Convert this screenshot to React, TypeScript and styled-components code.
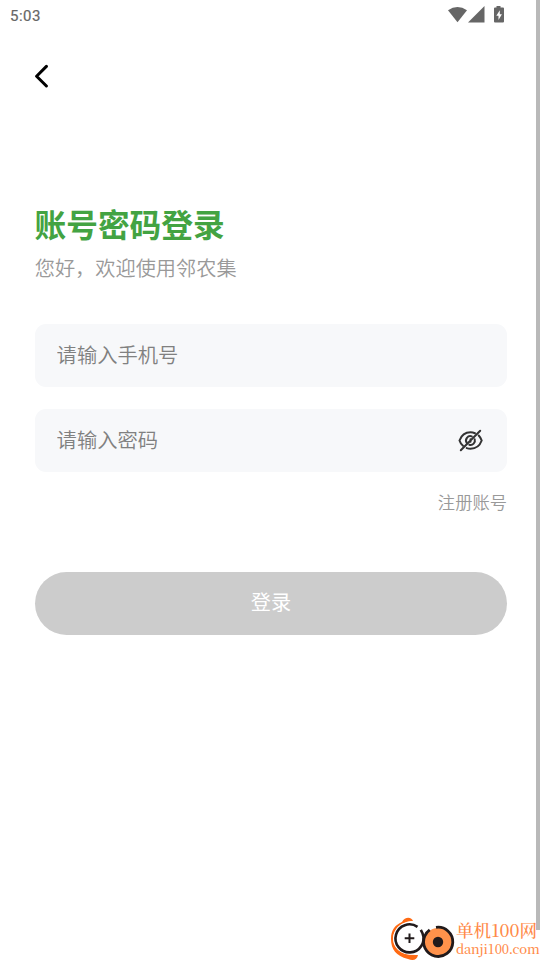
import React from 'react';
import styled, { createGlobalStyle } from 'styled-components';

const GlobalStyle = createGlobalStyle`
  * { box-sizing: border-box; }
  body { margin: 0; background: #fff; overflow: hidden; }
  button, input { font: inherit; border: 0; padding: 0; background: none; }
`;

const Screen = styled.div`
  position: relative;
  width: 540px;
  height: 960px;
  overflow: hidden;
  background: #fff;
  font-family: "Noto Sans CJK SC", sans-serif;
  font-weight: 350;
`;

const StatusBar = styled.header`
  height: 32px;
  padding: 0 35px 0 10px;
  display: flex;
  align-items: center;
  justify-content: space-between;
  color: #666;
`;

const Time = styled.span`
  font: 400 15px/32px Roboto, sans-serif;
  letter-spacing: 0.5px;
  -webkit-text-stroke: 0.2px currentColor;
`;

const StatusIcons = styled.svg`
  display: block;
  margin-bottom: 2px;
`;

const NavBar = styled.nav`
  height: 88px;
  padding: 0 35px;
  display: flex;
  align-items: center;
`;

const BackButton = styled.button`
  display: flex;
  width: 14px;
  height: 24px;
`;

const Content = styled.main`
  width: 542px;
  padding: 82px 35px 0;
  display: flex;
  flex-direction: column;
`;

const Title = styled.h1`
  margin: 0 0 0 -0.5px;
  font-size: 31.7px;
  font-weight: 700;
  line-height: 42px;
  color: #43a342;
`;

const Subtitle = styled.p`
  margin: 9px 0 0 -0.3px;
  font-size: 20.2px;
  line-height: 30px;
  color: #999;
`;

const Fields = styled.div`
  margin-top: 41px;
  display: flex;
  flex-direction: column;
  gap: 22px;
`;

const Field = styled.label`
  height: 63px;
  padding: 0 23px 0 21.6px;
  display: flex;
  align-items: center;
  justify-content: space-between;
  border-radius: 11px;
  background: #f7f8fa;
`;

const Input = styled.input`
  flex: 1;
  min-width: 0;
  height: 30px;
  margin-bottom: 3px;
  font-size: 20.3px;
  line-height: 30px;
  outline: none;
  &::placeholder { color: #808080; opacity: 1; }
`;

const RegisterLink = styled.a`
  align-self: flex-end;
  margin-top: 17px;
  font-size: 17.3px;
  line-height: 26px;
  color: #999;
`;

const LoginButton = styled.button`
  height: 63px;
  margin-top: 57px;
  padding-bottom: 4px;
  border-radius: 32px;
  background: #ccc;
  color: #fff;
  font-size: 20.2px;
  font-weight: 400;
`;

const ScrollThumb = styled.div`
  position: absolute;
  top: 0;
  right: 0;
  width: 4px;
  height: 930px;
  background: #b9b9b9;
`;

const Watermark = styled.aside`
  position: absolute;
  right: 2px;
  bottom: 0;
  display: flex;
  color: #ff8a48;
`;

const WatermarkText = styled.div`
  width: 82px;
  padding-top: 7px;
  display: flex;
  flex-direction: column;
  font-family: "Noto Serif CJK SC", serif;
  font-weight: 500;
  white-space: nowrap;
`;

const SiteName = styled.span`
  font-size: 17.6px;
  line-height: 18px;
`;

const SiteUrl = styled.span`
  font-size: 13px;
  line-height: 20px;
  letter-spacing: -0.22px;
`;

export default function App() {
  return (
    <Screen>
      <GlobalStyle />
      <StatusBar>
        <Time>5:03</Time>
        <StatusIcons width="58" height="18" viewBox="0 0 58 18" fill="#666">
          <path d="M1 4.2Q10.5-2.3 20 4.2L10.5 16.2Z" />
          <path d="M37.5 0V16.5H21Z" />
          <path d="M49.5 0h4v1.5H56q1 0 1 1v13q0 1-1 1h-8q-1 0-1-1v-13q0-1 1-1h1.5Z" />
          <path d="M52.8 4.2L49.3 9.7h2.2v4.2l3.4-5.6h-2.1Z" fill="#fff" />
        </StatusIcons>
      </StatusBar>
      <NavBar>
        <BackButton aria-label="返回">
          <svg width="14" height="24" viewBox="0 0 14 24" fill="none" stroke="#000" strokeWidth="3" strokeLinecap="round" strokeLinejoin="round">
            <path d="M11.4 2.4L1.6 12.2L11.4 22" />
          </svg>
        </BackButton>
      </NavBar>
      <Content>
        <Title>账号密码登录</Title>
        <Subtitle>您好，欢迎使用邻农集</Subtitle>
        <Fields>
          <Field><Input placeholder="请输入手机号" /></Field>
          <Field>
            <Input type="password" placeholder="请输入密码" />
            <svg width="27" height="24" viewBox="0 0 27 24" fill="none" stroke="#333" strokeWidth="2" strokeLinecap="round">
              <path d="M18 4.2Q15.8 3.3 13.5 3.3C8.5 3.3 4.3 6.5 2.5 11.5Q3.5 14.7 6 16.8M21.7 6.5Q23.8 8.7 24.7 11.5C22.8 16.7 18.5 19.7 13.6 19.7Q11.5 19.7 9.7 19.1" />
              <path d="M14.8 7.4A4.3 4.3 0 0 0 9.8 13.9M17.7 10.3A4.3 4.3 0 0 1 12.3 15.7" />
              <path d="M13.5 10.3v2.4M3.8 21.3L23.2 1.7" />
            </svg>
          </Field>
        </Fields>
        <RegisterLink>注册账号</RegisterLink>
        <LoginButton>登录</LoginButton>
      </Content>
      <ScrollThumb />
      <Watermark>
        <svg width="66" height="46" viewBox="0 0 66 46" fill="none">
          <path d="M12 8C15 2 22 3 23 7C12 7 3 15 3 25C3 34 11 42 28 41C27 46 23 47 18 45C6 42 1 35 1 25C1 16 5 11 12 8Z" fill="#ff6a13" />
          <circle cx="19.5" cy="24.3" r="16.2" fill="#fff" />
          <path d="M27.5 12.9A14 14 0 1 0 32.5 19.2L30.8 15.8" stroke="#211a1b" strokeWidth="2.6" />
          <path d="M19.5 19.5v9.6M14.7 24.3h9.6" stroke="#211a1b" strokeWidth="2" />
          <circle cx="48" cy="28" r="14" fill="#ff924b" />
          <path d="M46 13.4A14.6 14.6 0 1 1 34.8 22Q36.3 18.3 39.7 15.9" stroke="#211a1b" strokeWidth="2.8" />
          <circle cx="48" cy="28" r="5.2" fill="#211a1b" />
        </svg>
        <WatermarkText>
          <SiteName>单机100网</SiteName>
          <SiteUrl>danji100.com</SiteUrl>
        </WatermarkText>
      </Watermark>
    </Screen>
  );
}
